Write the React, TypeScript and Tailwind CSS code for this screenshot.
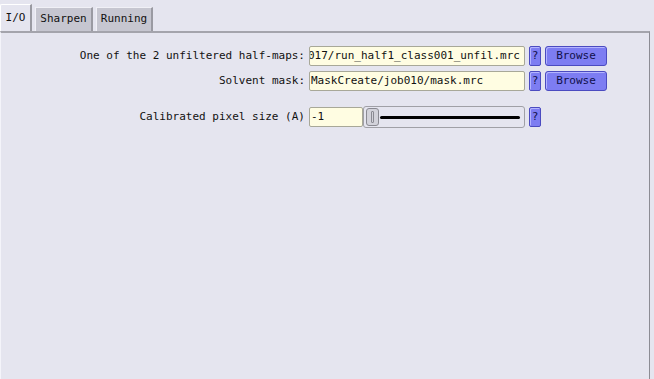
const MONO = "font-['DejaVu_Sans_Mono','Liberation_Mono',monospace]";

function Tab({ label, active, width }: { label: string; active?: boolean; width: number }) {
  return (
    <div
      className={
        active
          ? "h-[27px] flex items-center justify-center bg-[#e5e5ef] border-t border-l border-white border-r-2 border-r-[#9a9aa2] rounded-tl-[2px]"
          : "h-[24px] flex items-center justify-center bg-[#c6c6d0] border-t border-l border-[#f0f0f6] border-r-2 border-r-[#9a9aa2]"
      }
      style={{ width }}
    >
      {label}
    </div>
  );
}

function HelpButton() {
  return (
    <div className="w-[12px] h-[20px] flex items-center justify-center rounded-[2px] bg-[#7d7df2] border border-[#4b4bc0] text-[#10104a] shadow-[inset_1px_1px_0_#b4b4ff]">
      ?
    </div>
  );
}

function BrowseButton() {
  return (
    <div className="w-[62px] h-[20px] flex items-center justify-center rounded-[3px] bg-[#7d7df2] border border-[#4b4bc0] text-[#10104a] shadow-[inset_1px_1px_0_#b4b4ff]">
      Browse
    </div>
  );
}

function Field({ value, width, scrolled }: { value: string; width: number; scrolled?: boolean }) {
  return (
    <div
      className="h-[20px] flex items-center pl-[1px] bg-[#fffde2] border border-[#a8a898] rounded-[2px] overflow-hidden whitespace-nowrap"
      style={{ width }}
    >
      <span className={scrolled ? "-ml-[3px]" : ""}>{value}</span>
    </div>
  );
}

function FileRow({ label, value, scrolled }: { label: string; value: string; scrolled?: boolean }) {
  return (
    <div className="flex items-center gap-[4px]">
      <div className="w-[305px] text-right whitespace-nowrap">{label}</div>
      <Field value={value} width={216} scrolled={scrolled} />
      <HelpButton />
      <BrowseButton />
    </div>
  );
}

export default function App() {
  return (
    <div className={`w-[654px] h-[379px] bg-[#e5e5ef] flex flex-col text-[11px] text-[#111] ${MONO}`}>
      <div className="h-[31px] flex items-end gap-[3px] pt-[4px]">
        <Tab label="I/O" active width={32} />
        <Tab label="Sharpen" width={58} />
        <Tab label="Running" width={57} />
      </div>
      <div className="w-[650px] flex-1 border-t-2 border-[#a4a4ac] border-r border-r-[#8c8c94] border-l border-l-[#f4f4fa] pt-[13px] flex flex-col">
        <div className="flex flex-col gap-[5px] -ml-[1px]">
          <FileRow label="One of the 2 unfiltered half-maps:" value="017/run_half1_class001_unfil.mrc" scrolled />
          <FileRow label="Solvent mask:" value="MaskCreate/job010/mask.mrc" />
        </div>
        <div className="flex items-center gap-[4px] mt-[15px] -ml-[1px]">
          <div className="w-[305px] text-right whitespace-nowrap">Calibrated pixel size (A)</div>
          <div className="flex items-center">
            <Field value="-1" width={54} />
            <div className="w-[162px] h-[22px] flex items-center gap-[1px] px-[2px] border border-[#a0a0a6] rounded-[3px] bg-[#e5e5ef]">
              <div className="w-[13px] h-[18px] rounded-[3px] bg-[#d2d2da] border border-[#8a8a92] flex items-center justify-center">
                <div className="w-[3px] h-[12px] border border-[#8a8a92] rounded-[1px]" />
              </div>
              <div className="flex-1 h-[3px] bg-black rounded-full mr-[2px]" />
            </div>
          </div>
          <HelpButton />
        </div>
      </div>
    </div>
  );
}
